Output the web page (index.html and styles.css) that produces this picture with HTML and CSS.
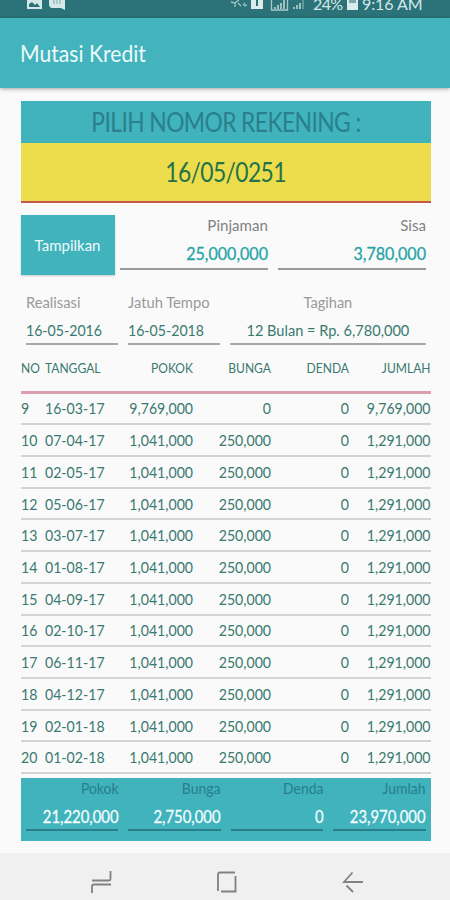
FILE: index.html
```html
<!DOCTYPE html>
<html lang="id">
  <head>
    <meta charset="UTF-8" />
    <meta name="viewport" content="width=device-width, initial-scale=1.0" />
    <title>Mutasi Kredit</title>
    <link rel="stylesheet" href="styles.css">
  </head>
  <body>
    <div class="status-bar">
      <svg class="status-left" width="42" height="12" viewBox="0 0 42 12">
        <path d="M1 0h15v9H1z" fill="#d5e8e9" />
        <path d="M3 7V4l3-2 3 3 2-2 3 4z" fill="#2b7378" />
        <path d="M23 0h16v10l-4-2H26c-2 0-3-2-3-4z" fill="#d5e8e9" />
        <path d="M28 0v4M31 0v4M34 0v4" stroke="#7fa9ac" />
      </svg>
      <svg class="status-right" width="76" height="12" viewBox="0 0 76 12">
        <path d="M1 2l4 1 4-3M5 3v4M8 3l3 3M13 5l2-2M14 6l3-1" stroke="#9fc1c4" stroke-width="1.4" fill="none" />
        <path d="M21 0h12v9H21z" fill="#dcebec" />
        <path d="M27 0v6" stroke="#2b7378" stroke-width="2" />
        <path d="M41.500 0v10h16V0" fill="none" stroke="#a9c8ca" stroke-width="1.300" />
        <path d="M45 7v2M48 5v4M51 3v6M54 0v9M64 7v2M67 5v4M70 3v6" stroke="#a9c8ca" stroke-width="1.800" />
        <path d="M73 0v9" stroke="#5d979b" stroke-width="2" />
      </svg>
      <span class="battery-text">24%</span>
      <svg class="battery" width="11" height="11" viewBox="0 0 11 11">
        <path d="M0 0h11v10H0z" fill="#dcebec" />
        <path d="M2 0h7v3H2z" fill="#7da9ac" />
      </svg>
      <span class="clock">9:16 AM</span>
    </div>
    <header class="toolbar">
      <h1>Mutasi Kredit</h1>
    </header>

    <main class="content">
      <div class="account-label"><span>PILIH NOMOR REKENING :</span></div>
      <div class="account-number"><span>16/05/0251</span></div>

      <section class="balance">
        <button class="show-btn">Tampilkan</button>
        <div class="field field-loan">
          <label>Pinjaman</label>
          <output>25,000,000</output>
        </div>
        <div class="field field-rest">
          <label>Sisa</label>
          <output>3,780,000</output>
        </div>
      </section>

      <section class="terms">
        <div class="term">
          <label>Realisasi</label>
          <output>16-05-2016</output>
        </div>
        <div class="term">
          <label>Jatuh Tempo</label>
          <output>16-05-2018</output>
        </div>
        <div class="term term-bill">
          <label>Tagihan</label>
          <output>12 Bulan = Rp. 6,780,000</output>
        </div>
      </section>

      <section class="mutations">
        <div class="row head"><span>NO</span><span>TANGGAL</span><span>POKOK</span><span>BUNGA</span><span>DENDA</span><span>JUMLAH</span></div>
        <div class="row"><span>9</span><span>16-03-17</span><span>9,769,000</span><span>0</span><span>0</span><span>9,769,000</span></div>
        <div class="row"><span>10</span><span>07-04-17</span><span>1,041,000</span><span>250,000</span><span>0</span><span>1,291,000</span></div>
        <div class="row"><span>11</span><span>02-05-17</span><span>1,041,000</span><span>250,000</span><span>0</span><span>1,291,000</span></div>
        <div class="row"><span>12</span><span>05-06-17</span><span>1,041,000</span><span>250,000</span><span>0</span><span>1,291,000</span></div>
        <div class="row"><span>13</span><span>03-07-17</span><span>1,041,000</span><span>250,000</span><span>0</span><span>1,291,000</span></div>
        <div class="row"><span>14</span><span>01-08-17</span><span>1,041,000</span><span>250,000</span><span>0</span><span>1,291,000</span></div>
        <div class="row"><span>15</span><span>04-09-17</span><span>1,041,000</span><span>250,000</span><span>0</span><span>1,291,000</span></div>
        <div class="row"><span>16</span><span>02-10-17</span><span>1,041,000</span><span>250,000</span><span>0</span><span>1,291,000</span></div>
        <div class="row"><span>17</span><span>06-11-17</span><span>1,041,000</span><span>250,000</span><span>0</span><span>1,291,000</span></div>
        <div class="row"><span>18</span><span>04-12-17</span><span>1,041,000</span><span>250,000</span><span>0</span><span>1,291,000</span></div>
        <div class="row"><span>19</span><span>02-01-18</span><span>1,041,000</span><span>250,000</span><span>0</span><span>1,291,000</span></div>
        <div class="row"><span>20</span><span>01-02-18</span><span>1,041,000</span><span>250,000</span><span>0</span><span>1,291,000</span></div>
      </section>

      <section class="totals">
        <div class="total"><label>Pokok</label><output>21,220,000</output></div>
        <div class="total"><label>Bunga</label><output>2,750,000</output></div>
        <div class="total"><label>Denda</label><output>0</output></div>
        <div class="total"><label>Jumlah</label><output>23,970,000</output></div>
      </section>
    </main>

    <nav class="nav-bar">
      <svg width="22" height="24" viewBox="0 0 22 24">
        <path d="M2 10.500h17q1.500 0 1.500-1.500V1M21 14.500H4q-2 0-2 2v6.500" />
      </svg>
      <svg width="22" height="24" viewBox="0 0 22 24">
        <path d="M19.500 18V6M19 2.500H4Q2 2.500 2 4.500V21M5 21.500h14.500v-4" />
      </svg>
      <svg width="22" height="24" viewBox="0 0 22 24">
        <path d="M10.500 2.500L2 12h19M4.500 15.500l6.500 6.500" />
      </svg>
    </nav>
  </body>
</html>
```
FILE: styles.css
```css
* {
  box-sizing: border-box;
}
body {
  margin: 0;
  width: 450px;
  height: 900px;
  overflow: hidden;
  background-color: #fafafa;
  font-family: Lato, "Liberation Sans", sans-serif;
  color: #39796f;
}
label,
output {
  display: block;
  white-space: nowrap;
}
.status-bar {
  display: flex;
  align-items: flex-start;
  height: 18px;
  padding-left: 26px;
  overflow: hidden;
  background-color: #2b7378;
  color: #d5e8e9;
  font-size: 16px;
  line-height: 18px;
}
.status-right {
  margin-left: 162px;
}
.battery-text {
  width: 34px;
  margin: -5px 0 0 7px;
  letter-spacing: -0.6px;
}
.clock {
  margin: -5px 0 0 4px;
  letter-spacing: -0.1px;
  white-space: nowrap;
}
.toolbar {
  display: flex;
  align-items: center;
  height: 70px;
  padding-left: 20px;
  background-color: #43b3be;
  box-shadow: 0 1px 4px rgba(0, 0, 0, 0.35);
}
h1 {
  margin: 0;
  color: #eefafa;
  font-size: 23.500px;
  font-weight: 400;
  transform: scaleX(0.9);
  transform-origin: left;
}
.content {
  height: 765px;
  padding: 12.500px 19.500px 0 20.500px;
}
.account-label,
.account-number {
  display: flex;
  align-items: center;
  justify-content: center;
  font-size: 26px;
  letter-spacing: -0.7px;
}
.account-label span,
.account-number span {
  transform: scaleX(0.88);
}
.account-label {
  height: 42.500px;
  background-color: #40b3bd;
  color: #2b7f8c;
}
.account-number {
  height: 59.500px;
  border-bottom: 2px solid #c5584d;
  background-color: #eddd4d;
  color: #247248;
}
.balance {
  display: flex;
  padding-top: 12.500px;
}
.show-btn {
  width: 94px;
  height: 60px;
  padding: 0;
  border: none;
  background-color: #40b3bd;
  box-shadow: 0 1px 2px rgba(0, 0, 0, 0.2);
  color: #eefafa;
  font-family: inherit;
  font-size: 15px;
}
.field {
  width: 148px;
  height: 55px;
  margin-left: 5.500px;
  border-bottom: 2px solid #9a9a9a;
  text-align: right;
}
.field-rest {
  margin-left: 10px;
}
.field label,
.field output {
  transform: scaleX(0.945);
  transform-origin: right;
}
.field label {
  color: #828282;
  font-size: 16px;
  line-height: 20px;
}
.field output {
  padding-top: 8px;
  color: #27a5a6;
  font-size: 17px;
  line-height: 22px;
  -webkit-text-stroke: 0.3px #27a5a6;
}
.terms {
  display: flex;
  gap: 10px;
  padding: 17px 4.500px 0 5px;
}
.term {
  width: 92.500px;
  height: 53px;
  border-bottom: 2px solid #a8a8a8;
}
.term label {
  color: #999;
  font-size: 15.500px;
  line-height: 21px;
  transform: scaleX(0.95);
  transform-origin: left;
}
.term output {
  padding-top: 6px;
  color: #39796f;
  font-size: 15.500px;
  line-height: 22px;
  transform: scaleX(0.91);
  transform-origin: left;
}
.term-bill {
  width: 196px;
  text-align: center;
}
.term-bill label,
.term-bill output {
  transform: scaleX(0.94);
  transform-origin: center;
}
.row {
  display: grid;
  grid-template-columns: 24.500px 68px 80px 78px 78px 1fr;
  align-items: center;
  height: 31.730px;
  border-bottom: 2px solid #d4d4d4;
  font-size: 15.500px;
  white-space: nowrap;
}
.row span {
  transform: scaleX(0.91);
  transform-origin: left;
}
.row span:nth-child(n + 3) {
  text-align: right;
  transform-origin: right;
}
.head {
  height: 48.500px;
  border-bottom: 3px solid #dc9fad;
  font-size: 14px;
}
.head span {
  transform: scaleX(0.86);
}
.totals {
  display: flex;
  gap: 10px;
  height: 63px;
  margin-top: 4px;
  padding: 0 5px;
  background-color: #40b3bd;
}
.total {
  width: 92.500px;
  height: 52.500px;
  border-bottom: 2px solid #2a7e88;
  text-align: right;
}
.total label,
.total output {
  transform: scaleX(0.9);
  transform-origin: right;
}
.total label {
  color: #287e89;
  font-size: 15.500px;
  line-height: 20px;
}
.total output {
  padding-top: 8px;
  color: #f2fcfc;
  font-size: 16.500px;
  line-height: 22px;
  -webkit-text-stroke: 0.3px #f2fcfc;
}
.nav-bar {
  display: flex;
  justify-content: center;
  gap: 104px;
  height: 47px;
  padding: 17px 0 0 4px;
  background-color: #f0f0f0;
}
.nav-bar path {
  fill: none;
  stroke: #818181;
  stroke-width: 1.800;
}
```
